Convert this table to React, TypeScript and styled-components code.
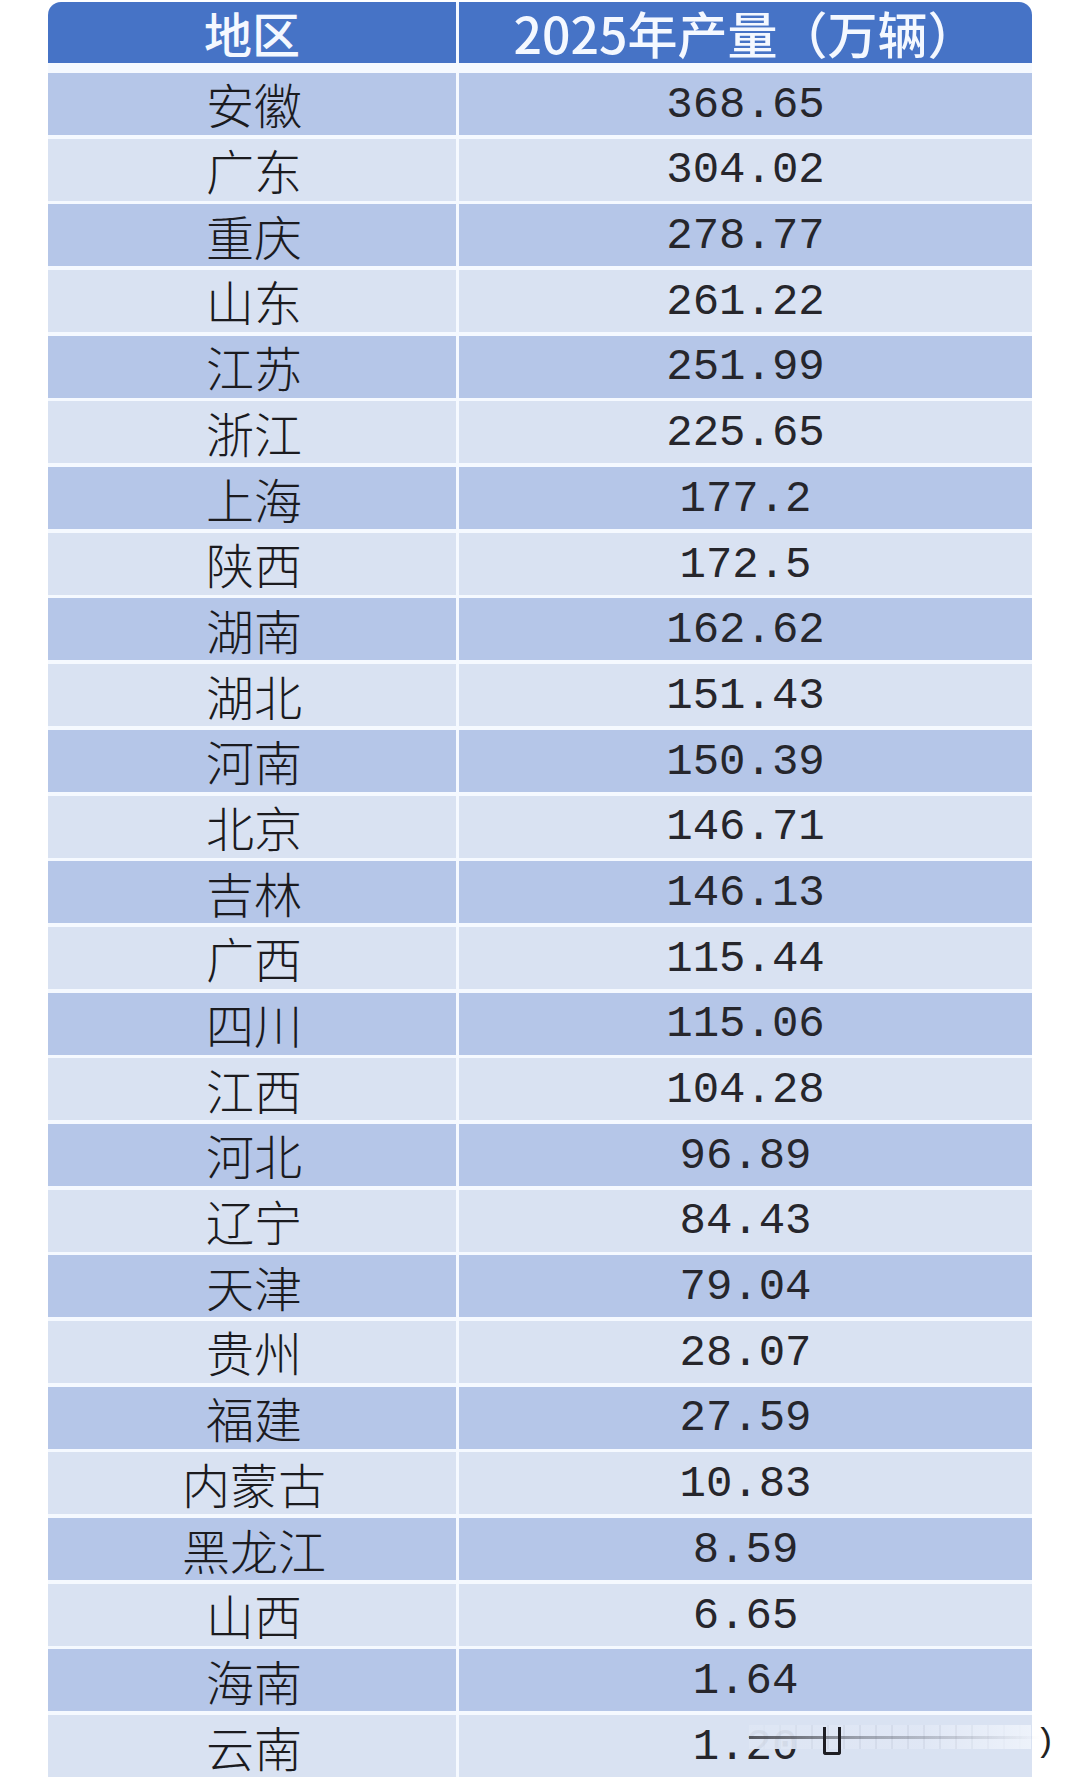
import styled, { createGlobalStyle } from 'styled-components';

const GlobalStyle = createGlobalStyle`
  html, body {
    margin: 0;
    padding: 0;
    background: #ffffff;
  }
  body {
    font-family: "Noto Sans CJK SC", "Noto Sans", sans-serif;
  }
`;

interface Entry {
  region: string;
  output: string;
}

const data: Entry[] = [
  { region: '安徽', output: '368.65' },
  { region: '广东', output: '304.02' },
  { region: '重庆', output: '278.77' },
  { region: '山东', output: '261.22' },
  { region: '江苏', output: '251.99' },
  { region: '浙江', output: '225.65' },
  { region: '上海', output: '177.2' },
  { region: '陕西', output: '172.5' },
  { region: '湖南', output: '162.62' },
  { region: '湖北', output: '151.43' },
  { region: '河南', output: '150.39' },
  { region: '北京', output: '146.71' },
  { region: '吉林', output: '146.13' },
  { region: '广西', output: '115.44' },
  { region: '四川', output: '115.06' },
  { region: '江西', output: '104.28' },
  { region: '河北', output: '96.89' },
  { region: '辽宁', output: '84.43' },
  { region: '天津', output: '79.04' },
  { region: '贵州', output: '28.07' },
  { region: '福建', output: '27.59' },
  { region: '内蒙古', output: '10.83' },
  { region: '黑龙江', output: '8.59' },
  { region: '山西', output: '6.65' },
  { region: '海南', output: '1.64' },
  { region: '云南', output: '1.20' },
];

const App = () => {
  return (
    <>
      <GlobalStyle />
      <Page>
        <Table>
          <HeaderRow>
            <HeaderCell $side="left">地区</HeaderCell>
            <HeaderCell $side="right">2025年产量（万辆）</HeaderCell>
          </HeaderRow>
          {data.map((row, i) => {
            const last = i === data.length - 1;
            return (
              <Row key={row.region}>
                <RegionCell $dark={i % 2 === 0}>{row.region}</RegionCell>
                <NumberCell $dark={i % 2 === 0}>
                  {row.output}
                  {last && (
                    <Smear>
                      <SmearBand />
                      <SmearLine />
                      <SmearHook />
                      <SmearParen>)</SmearParen>
                    </Smear>
                  )}
                </NumberCell>
              </Row>
            );
          })}
        </Table>
      </Page>
    </>
  );
};

const Page = styled.div`
  width: 1080px;
  box-sizing: border-box;
  padding: 2px 48px 0 48px;
`;

const Table = styled.div`
  display: flex;
  flex-direction: column;
  gap: 3.7px;
  background: #f5f9ff;
  border-radius: 13px 13px 0 0;
`;

const HeaderRow = styled.div`
  display: grid;
  grid-template-columns: 408px 573px;
  grid-template-rows: 61px;
  column-gap: 3px;
  margin-bottom: 6.3px;
  background: #f5f9ff;
  border-radius: 13px 13px 0 0;
`;

const HeaderCell = styled.div<{ $side: 'left' | 'right' }>`
  display: flex;
  align-items: center;
  justify-content: center;
  line-height: 1.15;
  background: #4673c6;
  color: #f4f8ff;
  font-size: ${(p) => (p.$side === 'left' ? '48px' : '50px')};
  font-weight: 500;
  border-radius: ${(p) => (p.$side === 'left' ? '13px 0 0 0' : '0 13px 0 0')};
  padding-top: 1px;
`;

const Row = styled.div`
  display: grid;
  grid-template-columns: 408px 573px;
  grid-template-rows: 62px;
  column-gap: 3px;
`;

const Cell = styled.div<{ $dark: boolean }>`
  display: flex;
  align-items: center;
  justify-content: center;
  line-height: 1.15;
  background: ${(p) => (p.$dark ? '#b5c6e8' : '#d9e2f2')};
`;

const RegionCell = styled(Cell)`
  font-family: "Noto Sans CJK SC", sans-serif;
  font-size: 48px;
  font-weight: 300;
  color: #1b1b1f;
  padding-left: 4px;
`;

const NumberCell = styled(Cell)`
  position: relative;
  font-family: "Liberation Mono", "DejaVu Sans Mono", monospace;
  font-size: 44px;
  color: #26262c;
  padding-top: 2px;
`;

const Smear = styled.div`
  position: absolute;
  left: 0;
  top: 0;
  width: 600px;
  height: 62px;
  pointer-events: none;
`;

const SmearBand = styled.div`
  position: absolute;
  left: 290px;
  top: 10px;
  width: 282px;
  height: 24px;
  background: linear-gradient(
    to right,
    rgba(222, 230, 244, 0.95),
    rgba(224, 231, 245, 0.9) 60%,
    rgba(238, 243, 251, 0.95)
  );
  &::after {
    content: '';
    position: absolute;
    inset: 0;
    background: repeating-linear-gradient(
      to right,
      rgba(120, 130, 150, 0) 0 14px,
      rgba(120, 130, 150, 0.1) 14px 16px
    );
    mask-image: linear-gradient(to right, transparent 0, #000 25%, #000 70%, transparent);
  }
`;

const SmearLine = styled.div`
  position: absolute;
  left: 290px;
  top: 21px;
  width: 290px;
  height: 3px;
  background: linear-gradient(
    to right,
    rgba(40, 40, 45, 0.75),
    rgba(80, 84, 95, 0.45) 40%,
    rgba(140, 145, 160, 0.2) 85%,
    rgba(200, 205, 215, 0)
  );
  filter: blur(0.6px);
`;

const SmearHook = styled.div`
  position: absolute;
  left: 364px;
  top: 12px;
  width: 12px;
  height: 25px;
  border: 3px solid #1e1e24;
  border-top: none;
  border-radius: 0 0 3px 3px;
`;

const SmearParen = styled.span`
  position: absolute;
  left: 576px;
  top: 10px;
  font-family: "Liberation Mono", monospace;
  font-size: 34px;
  line-height: 1;
  color: #222;
`;

export default App;
